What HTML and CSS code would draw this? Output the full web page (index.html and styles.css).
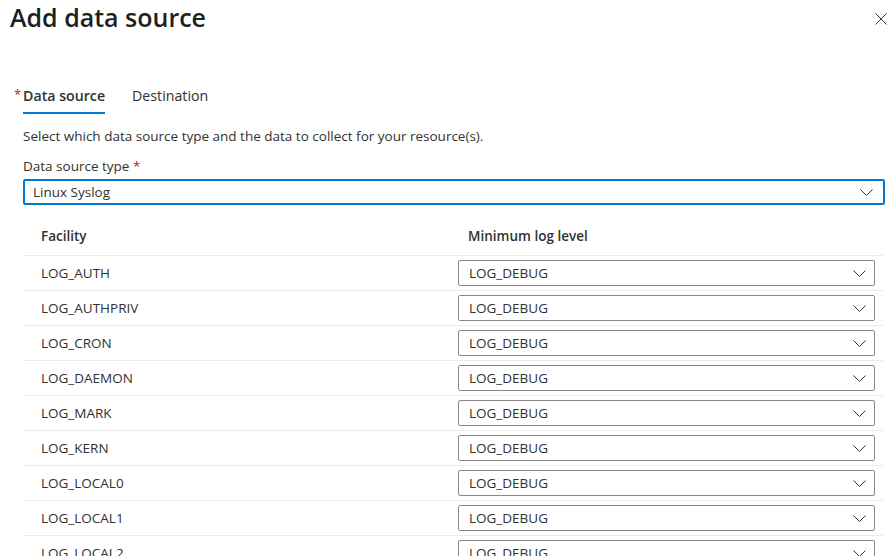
FILE: index.html
```html
<!DOCTYPE html>
<html lang="en">
<head>
<meta charset="utf-8">
<title>Add data source</title>
<link rel="stylesheet" href="styles.css">
</head>
<body>
<div class="panel">
  <header class="head">
    <h1 class="title">Add data source</h1>
    <button class="close" aria-label="Close">
      <svg width="12" height="12" viewBox="0 0 12 12"><path d="M0.5 0.5 L11.5 11.5 M11.5 0.5 L0.5 11.5" stroke="#323130" stroke-width="1" fill="none"/></svg>
    </button>
  </header>

  <nav class="tabs">
    <div class="tab active"><span class="tab-req">*</span><span class="tab-text">Data source</span></div>
    <div class="tab"><span class="tab-text">Destination</span></div>
  </nav>

  <p class="desc">Select which data source type and the data to collect for your resource(s).</p>

  <div class="label">Data source type <span class="req">*</span></div>
  <div class="select select-focus">
    <span class="select-text">Linux Syslog</span>
    <svg class="chev" width="13" height="7" viewBox="0 0 13 7"><path d="M0.5 0.5 L6.5 6.5 L12.5 0.5" stroke="#323130" stroke-width="1" fill="none"/></svg>
  </div>

  <div class="table">
    <div class="row row-head">
      <div class="cell c1">Facility</div>
      <div class="cell c2 head2">Minimum log level</div>
    </div>
    <div class="row"><div class="cell c1">LOG_AUTH</div><div class="cell c2"><div class="select dd"><span class="select-text">LOG_DEBUG</span><svg class="chev" width="13" height="7" viewBox="0 0 13 7"><path d="M0.5 0.5 L6.5 6.5 L12.5 0.5" stroke="#323130" stroke-width="1" fill="none"/></svg></div></div></div>
    <div class="row"><div class="cell c1">LOG_AUTHPRIV</div><div class="cell c2"><div class="select dd"><span class="select-text">LOG_DEBUG</span><svg class="chev" width="13" height="7" viewBox="0 0 13 7"><path d="M0.5 0.5 L6.5 6.5 L12.5 0.5" stroke="#323130" stroke-width="1" fill="none"/></svg></div></div></div>
    <div class="row"><div class="cell c1">LOG_CRON</div><div class="cell c2"><div class="select dd"><span class="select-text">LOG_DEBUG</span><svg class="chev" width="13" height="7" viewBox="0 0 13 7"><path d="M0.5 0.5 L6.5 6.5 L12.5 0.5" stroke="#323130" stroke-width="1" fill="none"/></svg></div></div></div>
    <div class="row"><div class="cell c1">LOG_DAEMON</div><div class="cell c2"><div class="select dd"><span class="select-text">LOG_DEBUG</span><svg class="chev" width="13" height="7" viewBox="0 0 13 7"><path d="M0.5 0.5 L6.5 6.5 L12.5 0.5" stroke="#323130" stroke-width="1" fill="none"/></svg></div></div></div>
    <div class="row"><div class="cell c1">LOG_MARK</div><div class="cell c2"><div class="select dd"><span class="select-text">LOG_DEBUG</span><svg class="chev" width="13" height="7" viewBox="0 0 13 7"><path d="M0.5 0.5 L6.5 6.5 L12.5 0.5" stroke="#323130" stroke-width="1" fill="none"/></svg></div></div></div>
    <div class="row"><div class="cell c1">LOG_KERN</div><div class="cell c2"><div class="select dd"><span class="select-text">LOG_DEBUG</span><svg class="chev" width="13" height="7" viewBox="0 0 13 7"><path d="M0.5 0.5 L6.5 6.5 L12.5 0.5" stroke="#323130" stroke-width="1" fill="none"/></svg></div></div></div>
    <div class="row"><div class="cell c1">LOG_LOCAL0</div><div class="cell c2"><div class="select dd"><span class="select-text">LOG_DEBUG</span><svg class="chev" width="13" height="7" viewBox="0 0 13 7"><path d="M0.5 0.5 L6.5 6.5 L12.5 0.5" stroke="#323130" stroke-width="1" fill="none"/></svg></div></div></div>
    <div class="row"><div class="cell c1">LOG_LOCAL1</div><div class="cell c2"><div class="select dd"><span class="select-text">LOG_DEBUG</span><svg class="chev" width="13" height="7" viewBox="0 0 13 7"><path d="M0.5 0.5 L6.5 6.5 L12.5 0.5" stroke="#323130" stroke-width="1" fill="none"/></svg></div></div></div>
    <div class="row"><div class="cell c1">LOG_LOCAL2</div><div class="cell c2"><div class="select dd"><span class="select-text">LOG_DEBUG</span><svg class="chev" width="13" height="7" viewBox="0 0 13 7"><path d="M0.5 0.5 L6.5 6.5 L12.5 0.5" stroke="#323130" stroke-width="1" fill="none"/></svg></div></div></div>
  </div>
</div>
</body>
</html>
```

FILE: styles.css
```css
* { box-sizing: border-box; }
html, body { margin: 0; padding: 0; background: #ffffff; }
body {
  font-family: "Open Sans", "Noto Sans", "Liberation Sans", sans-serif;
  color: #323130;
  font-size: 13.5px;
  width: 893px;
  height: 556px;
  overflow: hidden;
}
.panel { padding: 0 8px 0 23px; }

.head {
  display: flex;
  justify-content: space-between;
  align-items: flex-start;
  margin-left: -13px;
  margin-right: -8px;
  padding-top: 1px;
}
.title {
  margin: 0;
  font-size: 25px;
  font-weight: 600;
  line-height: 32px;
  color: #201f1e;
}
.close {
  border: 0;
  background: none;
  padding: 0;
  margin: 12px 6px 0 0;
  width: 12px;
  height: 12px;
  display: flex;
}

.tabs {
  display: flex;
  gap: 27px;
  margin-top: 53px;
  margin-left: -9px;
}
.tab {
  display: flex;
  align-items: flex-start;
  padding-bottom: 6px;
  border-bottom: 2px solid transparent;
}
.tab-req {
  color: #a4262c;
  font-size: 13px;
  line-height: 16px;
  width: 9px;
}
.tab-text {
  font-size: 14.2px;
  line-height: 20px;
  color: #323130;
}
.tab.active .tab-text {
  font-weight: 600;
  border-bottom: 2px solid #0078d4;
  padding-bottom: 6px;
  margin-bottom: -8px;
}

.desc {
  margin: 13px 0 0;
  line-height: 18px;
  font-size: 13.5px;
}
.label {
  margin-top: 11px;
  line-height: 20px;
  font-size: 13.5px;
}
.req { color: #a4262c; }

.select {
  display: flex;
  align-items: center;
  justify-content: space-between;
  height: 26px;
  border: 1px solid #8a8886;
  border-radius: 2px;
  padding: 0 8px 0 10px;
  background: #fff;
}
.select-focus {
  margin-top: 3px;
  border: 2px solid #0078d4;
  padding: 0 10px 0 8px;
}
.select-text { font-size: 13.5px; line-height: 20px; }
.chev { display: block; }

.table { display: flex; flex-direction: column; margin-right: 2px; }
.row {
  display: grid;
  grid-template-columns: 435px 1fr;
  border-bottom: 1px solid #edebe9;
  height: 35px;
  align-items: center;
}
.row-head {
  height: 51px;
  align-items: end;
  padding-bottom: 9px;
  font-weight: 600;
}
.cell { line-height: 20px; }
.c1 { padding-left: 18px; }
.c2 { padding-right: 8px; }
.head2 { padding-left: 10px; }
.dd { width: 100%; }
```
